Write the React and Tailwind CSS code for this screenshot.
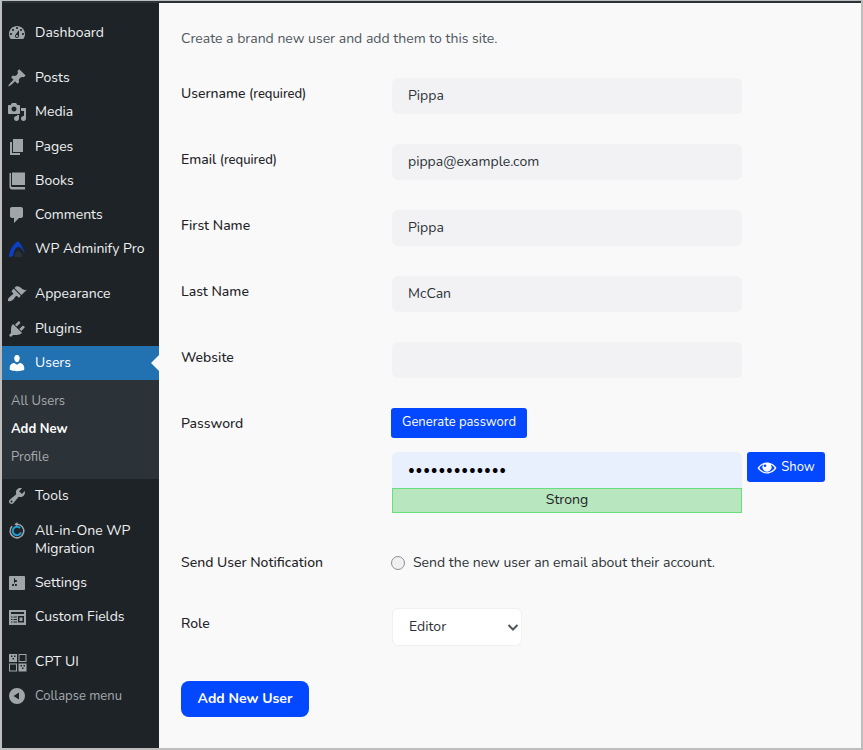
import React from 'react';

const ICONS = {
  dashboard: 'M3.76 16h12.48c1.1-1.37 1.76-3.11 1.76-5 0-4.42-3.58-8-8-8s-8 3.58-8 8c0 1.89.66 3.63 1.76 5zM10 4c.55 0 1 .45 1 1s-.45 1-1 1-1-.45-1-1 .45-1 1-1zM6 6c.55 0 1 .45 1 1s-.45 1-1 1-1-.45-1-1 .45-1 1-1zm8 0c.55 0 1 .45 1 1s-.45 1-1 1-1-.45-1-1 .45-1 1-1zm-5.37 5.55L12 7v6c0 1.1-.9 2-2 2s-2-.9-2-2c0-.57.24-1.08.63-1.45zM4 10c.55 0 1 .45 1 1s-.45 1-1 1-1-.45-1-1 .45-1 1-1zm12 0c.55 0 1 .45 1 1s-.45 1-1 1-1-.45-1-1 .45-1 1-1zm-5 3c0-.55-.45-1-1-1s-1 .45-1 1 .45 1 1 1 1-.45 1-1z',
  posts: 'M10.44 3.02l1.82-1.82 6.36 6.35-1.83 1.82c-1.05-.68-2.48-.57-3.41.36l-.75.75c-.92.93-1.04 2.35-.35 3.41l-1.83 1.82-2.41-2.41-2.8 2.79c-.42.42-3.38 2.71-3.8 2.29s1.86-3.39 2.28-3.81l2.79-2.79L4.1 9.36l1.83-1.82c1.05.69 2.48.57 3.41-.36l.75-.75c.93-.92 1.05-2.35.35-3.41z',
  media: 'M13 11V4c0-.55-.45-1-1-1h-1.67L9 1H5L3.67 3H2c-.55 0-1 .45-1 1v7c0 .55.45 1 1 1h10c.55 0 1-.45 1-1zM7 4.5c1.38 0 2.5 1.12 2.5 2.5S8.38 9.5 7 9.5 4.5 8.38 4.5 7 5.62 4.5 7 4.5zM14 6h5v10.5c0 1.38-1.12 2.5-2.5 2.5S14 17.88 14 16.5s1.12-2.5 2.5-2.5c.17 0 .34.02.5.05V9h-3V6zm-4 8.05V13h2v3.5c0 1.38-1.12 2.5-2.5 2.5S7 17.88 7 16.5 8.12 14 9.5 14c.17 0 .34.02.5.05z',
  pages: 'M6 15V2h10v13H6zm-1 1h8v2H3V5h2v11z',
  books: 'M5 1.500h13V14H5V1.500zM2.500 2H4v12.500c0 1 .5 1.500 1.500 1.500H18v2.500H5c-1.500 0-2.500-1-2.500-2.500V2z',
  comments: 'M5 2h9c1.1 0 2 .9 2 2v7c0 1.1-.9 2-2 2h-2l-5 5v-5H5c-1.1 0-2-.9-2-2V4c0-1.1.9-2 2-2z',
  appearance: 'M14.48 11.06L7.41 3.99l1.5-1.5c.5-.56 2.3-.47 3.51.32 1.21.8 1.43 1.28 2.91 2.1 1.18.64 2.45 1.26 4.45.85zm-.71.71L6.7 4.7 4.93 6.47c-.39.39-.39 1.02 0 1.41l1.06 1.06c.39.39.39 1.03 0 1.42-.6.6-1.43 1.11-2.21 1.69-.35.26-.7.53-1.01.84C1.43 13.23.43 16.2 1.2 16.96c.77.78 3.73-.23 5.07-1.57.31-.31.58-.66.84-1.01.58-.78 1.09-1.61 1.69-2.21.39-.39 1.03-.39 1.42 0l1.06 1.06c.39.39 1.02.39 1.41 0z',
  plugins: 'M13.11 4.36L9.87 7.6 8 5.73l3.24-3.24c.35-.34 1.05-.2 1.56.32.52.51.66 1.21.31 1.55zm-8 1.77l.91-1.12 9.01 9.01-1.19.84c-.71.71-2.63 1.16-3.82 1.16H6.14L4.9 17.26c-.59.59-1.54.59-2.12 0-.59-.58-.59-1.53 0-2.12l1.24-1.24v-3.88c0-1.13.4-3.19 1.09-3.89zm7.26 3.97l3.24-3.24c.34-.35 1.04-.21 1.55.31.52.51.66 1.21.31 1.55l-3.24 3.25z',
  users: 'M10 9.25c-2.27 0-2.73-3.44-2.73-3.44C7 4.02 7.82 2 9.97 2c2.16 0 2.98 2.02 2.71 3.81 0 0-.41 3.44-2.68 3.44zm0 2.57L12.72 10c2.39 0 4.52 2.33 4.52 4.53v2.49s-3.65 1.13-7.24 1.13c-3.65 0-7.24-1.13-7.24-1.13v-2.49c0-2.25 1.94-4.48 4.47-4.48z',
  tools: 'M16.68 9.77c-1.34 1.34-3.3 1.67-4.95.99l-5.41 6.52c-.99.99-2.59.99-3.58 0s-.99-2.59 0-3.57l6.52-5.42c-.68-1.65-.35-3.61.99-4.95 1.28-1.28 3.12-1.62 4.72-1.06l-2.89 2.89 2.82 2.82 2.86-2.87c.53 1.58.18 3.39-1.08 4.65zM3.81 16.21c.4.39 1.04.39 1.43 0 .4-.4.4-1.04 0-1.43-.39-.4-1.03-.4-1.43 0-.39.39-.39 1.03 0 1.43z',
  settings: 'M18 16V4c0-.55-.45-1-1-1H3c-.55 0-1 .45-1 1v12c0 .55.45 1 1 1h14c.55 0 1-.45 1-1zM8 11h1c.55 0 1 .45 1 1s-.45 1-1 1H8v1.5c0 .28-.22.5-.5.5s-.5-.22-.5-.5V13H6c-.55 0-1-.45-1-1s.45-1 1-1h1V5.5c0-.28.22-.5.5-.5s.5.22.5.5V7h1c.55 0 1 .45 1 1s-.45 1-1 1h-1v5.5c0 .28-.22.5-.5.5s-.5-.22-.5-.5V9z',
  fields: 'M2 3h17v15H2V3zm2 2v2h13V5H4zm0 4.500v1h1.500v-1H4zm2.500 0v1H10v-1H6.500zM11 9v6.500h6V9h-6zm1.500 1.500h3V14h-3v-3.500zM4 12v1h1.500v-1H4zm2.500 0v1H10v-1H6.500zM4 14.500v1h1.500v-1H4zm2.500 0v1H10v-1H6.500z',
  cpt: 'M2 2h8v8H2V2zm2 1.500v1.500h1.500V3.500H4zm3 0v1.500h1.500V3.500H7zm-1.500 2.500v1.500H7V6H5.500zM11.500 2h8v8h-8V2zm1 1v6h6V3h-6zM2 11.500h8v8H2v-8zm1 1v6h6v-6H3zm8.500-1h8v8h-8v-8zm2 1.500v1.500H15V13h-1.500zm3 0v1.500H18V13h-1.500zM15 15.500V17h1.500v-1.500H15z',
  collapse: 'M10 2a8 8 0 1 0 0 16 8 8 0 0 0 0-16zm2 4.500v7L6.500 10 12 6.500z',
};

const MENU_TOP = [
  { label: 'Posts', icon: 'posts' },
  { label: 'Media', icon: 'media' },
  { label: 'Pages', icon: 'pages' },
  { label: 'Books', icon: 'books' },
  { label: 'Comments', icon: 'comments' },
];

const FIELDS = [
  { label: 'Username', required: true, value: 'Pippa' },
  { label: 'Email', required: true, value: 'pippa@example.com' },
  { label: 'First Name', value: 'Pippa' },
  { label: 'Last Name', value: 'McCan' },
  { label: 'Website', value: '' },
];

function Icon({ name, className = 'text-[#a0a5aa]' }) {
  return (
    <svg viewBox="0 0 20 20" className={`h-5 w-5 shrink-0 fill-current ${className}`}>
      <path fillRule="evenodd" d={ICONS[name]} />
    </svg>
  );
}

function MenuItem({ icon, label }) {
  return (
    <div className="flex h-[34.3px] items-center gap-[8px] pl-[5px] text-[#f0f0f1]">
      <Icon name={icon} />
      <span>{label}</span>
    </div>
  );
}

function MigrationIcon() {
  return (
    <svg viewBox="0 0 20 20" className="h-[18px] w-[18px] shrink-0 fill-none">
      <path d="M4.600 4.600A7.600 7.600 0 1 0 10 2.400" stroke="#a0a5aa" strokeWidth="1.700" />
      <path d="M10.500 0v5L7 2.500z" fill="#a0a5aa" />
      <path d="M13.500 6.800A4.700 4.700 0 1 0 14.400 11.500" stroke="#1f9fd8" strokeWidth="2.200" />
    </svg>
  );
}

function AdminifyIcon() {
  return (
    <svg viewBox="0 0 20 20" className="h-5 w-5 shrink-0">
      <path d="M2 18C2 12 6 5 11 2c3 3 6 8 7 13-2-4-4-7-7-7-2.500 0-4 4-5 9-1 .5-3 1-4 1z" fill="#0c3fc4" />
      <path d="M7 18c.6-3 2-6 4-6 2 0 4 3 5 6H7z" fill="#2c3138" />
    </svg>
  );
}

function Sidebar() {
  return (
    <aside className="flex w-[157px] shrink-0 flex-col bg-[#1d2327] pt-[12.5px] text-[14px] leading-[18px]">
      <MenuItem icon="dashboard" label="Dashboard" />
      <div className="mt-[11px]">
        {MENU_TOP.map((item) => (
          <MenuItem key={item.label} icon={item.icon} label={item.label} />
        ))}
        <div className="flex h-[34.3px] items-center gap-[8px] pl-[5px] text-[#f0f0f1]">
          <AdminifyIcon />
          <span>WP Adminify Pro</span>
        </div>
      </div>
      <div className="mt-[10.6px]">
        <MenuItem icon="appearance" label="Appearance" />
        <MenuItem icon="plugins" label="Plugins" />
        <div className="relative flex h-[34.3px] items-center gap-[8px] bg-[#2271b1] pl-[5px] text-white">
          <Icon name="users" className="text-white" />
          <span>Users</span>
          <div className="absolute right-0 top-[9px] h-0 w-0 border-y-[8px] border-r-[8px] border-y-transparent border-r-[#f9f9f9]" />
        </div>
        <div className="flex h-[99px] flex-col justify-center bg-[#2c3338] pb-px pl-[9px] text-[13px] leading-[28px] text-[#a7aaad]">
          <div>All Users</div>
          <div className="font-bold text-white">Add New</div>
          <div>Profile</div>
        </div>
        <MenuItem icon="tools" label="Tools" />
        <div className="flex h-[52.5px] items-center gap-[9px] pl-[6px] text-[#f0f0f1]">
          <div className="self-start pt-[9px]">
            <MigrationIcon />
          </div>
          <span>All-in-One WP Migration</span>
        </div>
        <MenuItem icon="settings" label="Settings" />
        <MenuItem icon="fields" label="Custom Fields" />
      </div>
      <div className="mt-[10.5px]">
        <MenuItem icon="cpt" label="CPT UI" />
        <div className="flex h-[34.3px] items-center gap-[8px] pl-[5px] text-[13px] text-[#a7aaad]">
          <Icon name="collapse" />
          <span>Collapse menu</span>
        </div>
      </div>
    </aside>
  );
}

function FieldRow({ label, required, value }) {
  return (
    <div className="mb-[30px] flex">
      <label className="w-[211px] shrink-0 pt-[6px] text-[14px] font-medium leading-5 text-[#1d2327]">
        {label}
        {required && <span className="text-[13px]"> (required)</span>}
      </label>
      <input
        readOnly
        value={value}
        className="h-9 w-[350px] rounded-md bg-[#f2f2f5] px-4 pb-0.5 text-[14px] text-[#2c3338] outline-none"
      />
    </div>
  );
}

export default function App() {
  return (
    <div className="flex h-[750px] w-[863px] flex-col overflow-hidden border-x-2 border-b-2 border-[#bdbdbd] font-['Nunito','Noto_Sans',sans-serif]">
      <div className="h-[3px] shrink-0 border-t border-[#bdbdbd] bg-[#2c3338]" />
      <div className="flex min-h-0 flex-1">
        <Sidebar />
        <main className="flex-1 bg-[#f9f9f9] pl-[22px]">
          <p className="mt-[26px] mb-[29px] text-[14px] leading-5 text-[#50575e]">
            Create a brand new user and add them to this site.
          </p>

          {FIELDS.map((field) => (
            <FieldRow key={field.label} {...field} />
          ))}

          <div className="flex">
            <label className="w-[211px] shrink-0 pt-[6px] text-[14px] font-medium leading-5 text-[#1d2327]">Password</label>
            <div>
              <button type="button" className="-ml-px h-[30px] w-[136px] rounded-[3px] bg-[#0347ff] text-[13px] text-white">
                Generate password
              </button>
              <div className="mt-[14px] flex items-start gap-[5px]">
                <div className="w-[350px]">
                  <input
                    readOnly
                    type="password"
                    value="abcdefghijklm"
                    className="block h-9 w-full rounded-t-md bg-[#e8f0fe] px-4 text-[13px] tracking-[0.8px] text-black outline-none"
                  />
                  <div className="flex h-[25px] items-center justify-center border border-[#68de7c] bg-[#b8e6bf] pb-0.5 text-[14px] text-[#1d2327]">
                    Strong
                  </div>
                </div>
                <button type="button" className="flex h-[30px] w-[78px] items-center justify-center gap-[4px] rounded-[3px] bg-[#0347ff] text-[13px] text-white">
                  <svg viewBox="0 0 20 20" className="mt-px h-5 w-5 fill-current">
                    <path fillRule="evenodd" d="M10 4.500c4 0 7.500 2.300 9.500 5.500-2 3.200-5.500 5.500-9.500 5.500S2.500 13.200.5 10c2-3.200 5.500-5.500 9.500-5.500zM2.300 10c1.700 2.500 4.500 4.200 7.700 4.200s6-1.700 7.700-4.200c-1-1.500-2.400-2.700-4-3.400a4.500 4.500 0 1 1-7.400 0c-1.600.7-3 1.900-4 3.400zM8 6.500a1.300 1.300 0 1 0 0 2.600 1.300 1.300 0 0 0 0-2.600z" />
                  </svg>
                  <span className="pt-px">Show</span>
                </button>
              </div>
            </div>
          </div>

          <div className="mt-[40px] flex items-center">
            <div className="w-[211px] shrink-0 text-[14px] font-medium leading-5 text-[#1d2327]">Send User Notification</div>
            <label className="-ml-px flex items-center gap-2 text-[14px] leading-5 text-[#2c3338]">
              <input type="radio" readOnly className="h-[14px] w-[14px] appearance-none rounded-full border border-[#8c8f94] bg-[#f0f0f1]" />
              Send the new user an email about their account.
            </label>
          </div>

          <div className="mt-[35px] flex">
            <div className="w-[211px] shrink-0 pt-[6px] text-[14px] font-medium leading-5 text-[#1d2327]">Role</div>
            <div className="relative">
              <select className="h-[38px] w-[130px] appearance-none rounded-md border border-[#f0f0f1] bg-white pb-0.5 pl-4 text-[14px] text-[#2c3338] outline-none">
                <option>Editor</option>
              </select>
              <svg viewBox="0 0 12 12" className="pointer-events-none absolute right-[3px] top-[13px] h-3 w-3 fill-none stroke-[#50575e] stroke-2">
                <path d="M1.500 4l4.500 4.500L10.500 4" />
              </svg>
            </div>
          </div>

          <button type="button" className="mt-[35px] h-9 w-[128px] rounded-lg bg-[#0347ff] pb-0.5 text-[14px] font-bold text-white">
            Add New User
          </button>
        </main>
      </div>
    </div>
  );
}
